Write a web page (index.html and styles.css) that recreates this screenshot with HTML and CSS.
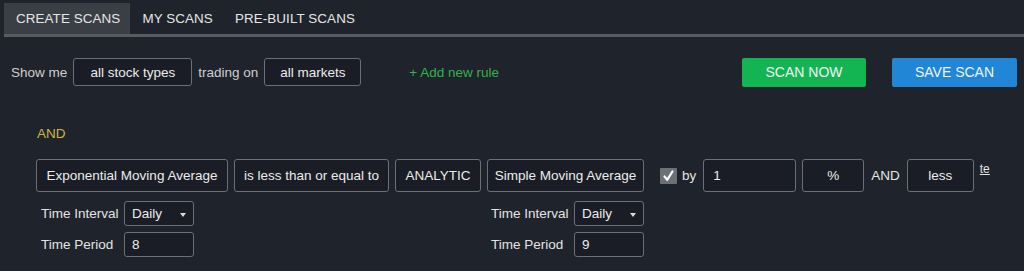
FILE: index.html
```html
<!DOCTYPE html>
<html>
<head>
<meta charset="utf-8">
<link rel="stylesheet" href="styles.css">
</head>
<body>
<div class="tabs">
  <div class="tab active">CREATE SCANS</div>
  <div class="tab">MY SCANS</div>
  <div class="tab">PRE-BUILT SCANS</div>
</div>
<div class="tabline"></div>

<div class="toprow">
  <span class="label">Show me</span>
  <div class="box w119">all stock types</div>
  <span class="label">trading on</span>
  <div class="box w97">all markets</div>
  <span class="addrule">+ Add new rule</span>
  <div class="btn green">SCAN NOW</div>
  <div class="btn blue">SAVE SCAN</div>
</div>

<div class="rule">
  <div class="andlabel">AND</div>
  <div class="rulerow">
    <div class="box tall w192">Exponential Moving Average</div>
    <div class="box tall w155">is less than or equal to</div>
    <div class="box tall w85">ANALYTIC</div>
    <div class="box tall w157">Simple Moving Average</div>
    <div class="check"><svg width="17" height="16" viewBox="0 0 17 16"><path d="M4.5 8.5 L7.2 11.8 L12.5 3.5" fill="none" stroke="#ffffff" stroke-width="2.2" stroke-linecap="round" stroke-linejoin="round"/></svg></div>
    <span class="by">by</span>
    <div class="box tall w93 left">1</div>
    <div class="box tall w62">%</div>
    <span class="and2">AND</span>
    <div class="box tall w67">less</div>
    <span class="te">te</span>
  </div>
  <div class="params">
    <div class="pgroup">
      <div class="prow"><span class="plabel">Time Interval</span><div class="select">Daily<span class="caret"></span></div></div>
      <div class="prow"><span class="plabel">Time Period</span><div class="pinput">8</div></div>
    </div>
    <div class="pgroup">
      <div class="prow"><span class="plabel">Time Interval</span><div class="select">Daily<span class="caret"></span></div></div>
      <div class="prow"><span class="plabel">Time Period</span><div class="pinput">9</div></div>
    </div>
  </div>
</div>
</body>
</html>
```

FILE: styles.css
```css
html, body {
  margin: 0;
  padding: 0;
  background: #1f232b;
  color: #e4e4e4;
  font-family: "Liberation Sans", Arial, sans-serif;
  font-size: 13.5px;
  height: 271px;
  overflow: hidden;
}

.tabs {
  display: flex;
  margin: 3px 0 0 4px;
  height: 31px;
}
.tab {
  display: flex;
  align-items: center;
  padding: 0 10px 0 12px;
  color: #e6e6e6;
  font-size: 13.4px;
  letter-spacing: 0.1px;
}
.tab.active {
  background: #3a3e45;
}
.tabline {
  margin-left: 4px;
  height: 3px;
  background: #575c63;
}

.toprow {
  display: flex;
  align-items: center;
  margin-top: 21px;
  padding-left: 11px;
  height: 28px;
}
.label {
  color: #cfcfcf;
  margin-right: 6px;
}
.box {
  box-sizing: border-box;
  height: 28px;
  border: 1px solid #6b6f76;
  border-radius: 3px;
  background: #1a1d25;
  display: flex;
  align-items: center;
  justify-content: center;
  color: #ececec;
  white-space: nowrap;
}
.toprow .box { margin-right: 6px; }
.w119 { width: 119px; }
.w97 { width: 97px; }
.addrule {
  color: #2fb54e;
  margin-left: 42px;
}
.btn {
  box-sizing: border-box;
  height: 29px;
  border-radius: 2px;
  display: flex;
  align-items: center;
  justify-content: center;
  color: #f2f2f2;
  font-size: 14px;
}
.btn.green {
  background: #13b553;
  width: 124px;
  margin-left: auto;
}
.btn.blue {
  background: #2286d6;
  width: 125px;
  margin-left: 26px;
  margin-right: 7px;
}

.rule {
  padding-left: 36px;
}
.andlabel {
  color: #cbb741;
  margin-top: 40px;
  height: 15px;
  line-height: 15px;
  padding-left: 1px;
}
.rulerow {
  display: flex;
  align-items: center;
  margin-top: 18px;
  height: 33px;
}
.box.tall {
  height: 33px;
  margin-right: 6px;
}
.w192 { width: 192px; }
.w155 { width: 155px; }
.w85 { width: 86px; }
.w157 { width: 157px; }
.w93 { width: 93px; }
.w62 { width: 62px; }
.w67 { width: 67px; }
.box.left {
  justify-content: flex-start;
  padding-left: 9px;
}
.check {
  width: 17px;
  height: 16px;
  background: #6d7076;
  border-radius: 1px;
  margin-left: 10px;
  margin-right: 5px;
  display: flex;
}
.by {
  color: #e4e4e4;
  margin-right: 7px;
}
.and2 {
  margin-left: 1px;
  margin-right: 7px;
}
.te {
  align-self: flex-start;
  margin-top: 3px;
  text-decoration: underline;
  font-size: 12px;
  color: #e4e4e4;
}

.params {
  display: flex;
  margin-top: 9px;
  padding-left: 5px;
}
.pgroup {
  width: 450px;
  display: flex;
  flex-direction: column;
  gap: 6px;
}
.prow {
  display: flex;
  align-items: center;
  height: 25px;
}
.plabel {
  width: 83px;
  color: #e4e4e4;
}
.select, .pinput {
  box-sizing: border-box;
  width: 70px;
  height: 25px;
  border: 1px solid #6b6f76;
  border-radius: 3px;
  background: #1a1d25;
  display: flex;
  align-items: center;
  padding-left: 7px;
  color: #ececec;
  position: relative;
}
.caret {
  position: absolute;
  right: 7px;
  top: 11px;
  width: 0;
  height: 0;
  border-left: 3.5px solid transparent;
  border-right: 3.5px solid transparent;
  border-top: 4px solid #dcdcdc;
}
```
